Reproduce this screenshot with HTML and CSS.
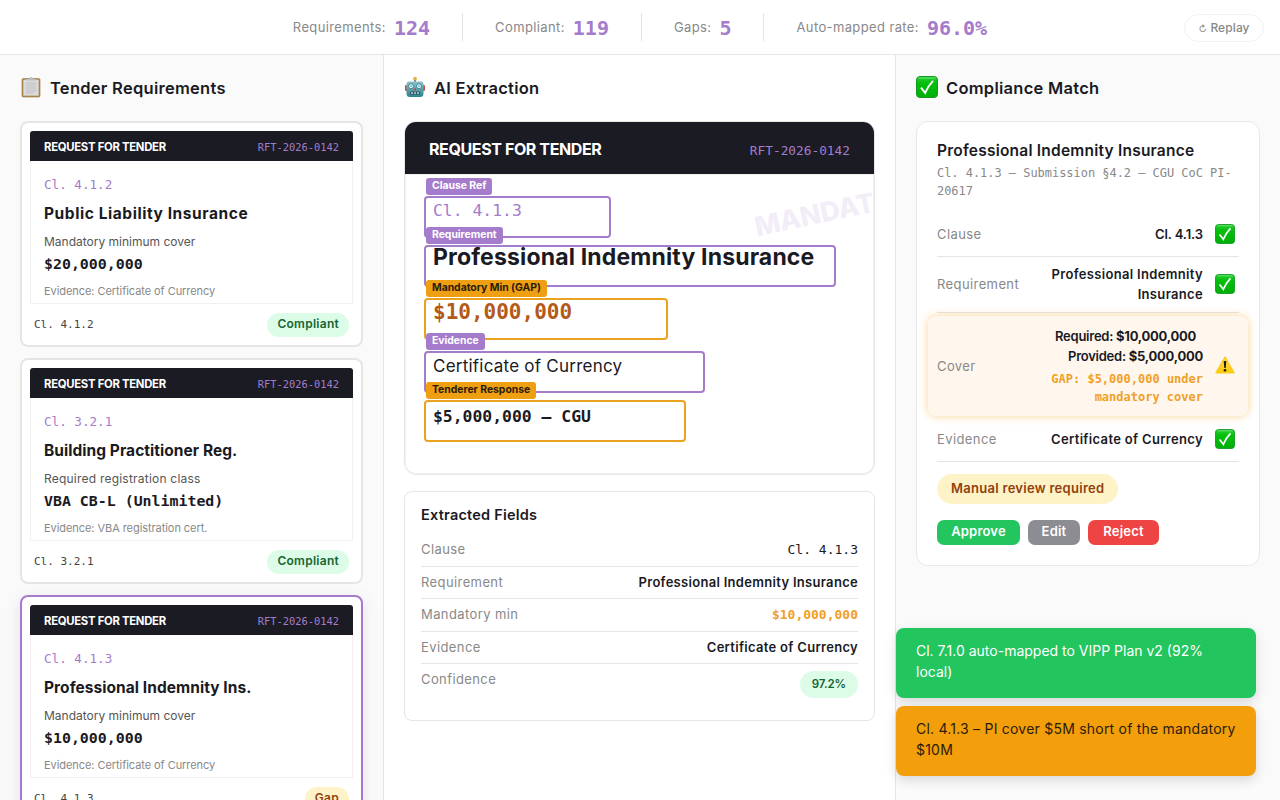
FILE: index.html
```html
<!DOCTYPE html>
<html lang="en">

<head>
    <meta charset="UTF-8">
    <meta name="viewport" content="width=device-width, initial-scale=1.0">
    <title>Tender Compliance</title>
    <link rel="stylesheet" href="styles.css">
</head>

<body>
    <!-- shared icons -->
    <svg class="defs" width="0" height="0">
        <defs>
            <linearGradient id="green" x1="0" y1="0" x2="0" y2="1">
                <stop offset="0" stop-color="#2fcf3c" />
                <stop offset=".3" stop-color="#06c00c" />
                <stop offset="1" stop-color="#00ad08" />
            </linearGradient>
            <linearGradient id="yellow" x1="0" y1="0" x2="0" y2="1">
                <stop offset="0" stop-color="#ffe45c" />
                <stop offset="1" stop-color="#fcc708" />
            </linearGradient>
            <linearGradient id="teal" x1="0" y1="0" x2="0" y2="1">
                <stop offset="0" stop-color="#8fc3c8" />
                <stop offset="1" stop-color="#2b8290" />
            </linearGradient>
        </defs>
        <symbol id="check" viewBox="0 0 22 22">
            <rect x=".5" y=".5" width="21" height="21" rx="3.5" fill="url(#green)" stroke="#119a20" />
            <path d="M2.5 2h17" stroke="#7be584" stroke-width=".8" />
            <path d="M5 11.6L9.2 16.8Q12 10 17 4.8" fill="none" stroke="#fff" stroke-width="1.9" />
        </symbol>
        <symbol id="warn" viewBox="0 0 20 18">
            <path d="M10 1.2L19 16.8H1z" fill="url(#yellow)" stroke="#fbcb18" stroke-width="1.4" stroke-linejoin="round" />
            <path d="M8.7 5h2.6l-.6 7H9.3z" fill="#1c1a12" />
            <circle cx="10" cy="14.3" r="1.3" fill="#1c1a12" />
        </symbol>
        <symbol id="clipboard" viewBox="0 0 20 22">
            <rect x="1" y="2.6" width="18" height="18.4" rx="1.2" fill="#b68d53" stroke="#8f6b3b" stroke-width=".6" />
            <rect x="2.4" y="3.8" width="15.2" height="15.8" fill="#dcdcde" />
            <path d="M4.5 7h11M4.5 9h11M4.5 11h11M4.5 13h11M4.5 15h11M4.5 17h8" stroke="#bcbcc2" stroke-width=".9" />
            <path d="M5 4.6V3h3Q8.5.9 10 .9T12 3h3v1.6z" fill="#b9bec4" />
        </symbol>
        <symbol id="robot" viewBox="0 0 20 22">
            <circle cx="10" cy="2.8" r="2" fill="#e8b04c" />
            <rect x="9" y="4" width="2" height="2" fill="#7d8d91" />
            <rect x="0" y="9" width="3" height="6" rx="1.2" fill="#c24b4b" />
            <rect x="17" y="9" width="3" height="6" rx="1.2" fill="#c24b4b" />
            <path d="M4 5.5h12q2.5 0 2.5 3v9q0 3.5-3.5 3.5H5q-3.5 0-3.5-3.5v-9q0-3 2.5-3z" fill="url(#teal)" />
            <circle cx="6" cy="10.2" r="2.5" fill="#d8f6fb" stroke="#31727e" stroke-width=".8" />
            <circle cx="14" cy="10.2" r="2.5" fill="#d8f6fb" stroke="#31727e" stroke-width=".8" />
            <circle cx="6" cy="10.2" r=".9" fill="#4cb9d4" />
            <circle cx="14" cy="10.2" r=".9" fill="#4cb9d4" />
            <path d="M10 11.5l1.3 2.5H8.7z" fill="#c93c3c" />
            <rect x="5" y="15.5" width="10" height="3" rx=".8" fill="#2a535c" />
            <path d="M6.2 17h1.6M9.2 17h1.6M12.2 17h1.6" stroke="#e7f3f4" stroke-width="1.6" />
        </symbol>
    </svg>

    <header class="stats">
        <div class="stat">Requirements: <b>124</b></div>
        <div class="stat">Compliant: <b>119</b></div>
        <div class="stat">Gaps: <b>5</b></div>
        <div class="stat">Auto-mapped rate: <b>96.0%</b></div>
        <button class="replay"><span>↻</span> Replay</button>
    </header>

    <main class="columns">
        <section class="column side">
            <h2><svg><use href="#clipboard" /></svg>Tender Requirements</h2>
            <div class="card">
                <div class="thumb">
                    <div class="thumb-head"><b>REQUEST FOR TENDER</b><span>RFT-2026-0142</span></div>
                    <p class="clause">Cl. 4.1.2</p>
                    <h3 class="wide">Public Liability Insurance</h3>
                    <p class="label">Mandatory minimum cover</p>
                    <p class="value">$20,000,000</p>
                    <p class="evidence">Evidence: Certificate of Currency</p>
                </div>
                <div class="card-foot"><span class="ref">Cl. 4.1.2</span><span class="pill ok">Compliant</span></div>
            </div>
            <div class="card">
                <div class="thumb">
                    <div class="thumb-head"><b>REQUEST FOR TENDER</b><span>RFT-2026-0142</span></div>
                    <p class="clause">Cl. 3.2.1</p>
                    <h3>Building Practitioner Reg.</h3>
                    <p class="label loose">Required registration class</p>
                    <p class="value">VBA CB-L (Unlimited)</p>
                    <p class="evidence">Evidence: VBA registration cert.</p>
                </div>
                <div class="card-foot"><span class="ref">Cl. 3.2.1</span><span class="pill ok">Compliant</span></div>
            </div>
            <div class="card active">
                <div class="thumb">
                    <div class="thumb-head"><b>REQUEST FOR TENDER</b><span>RFT-2026-0142</span></div>
                    <p class="clause">Cl. 4.1.3</p>
                    <h3>Professional Indemnity Ins.</h3>
                    <p class="label">Mandatory minimum cover</p>
                    <p class="value">$10,000,000</p>
                    <p class="evidence">Evidence: Certificate of Currency</p>
                </div>
                <div class="card-foot"><span class="ref">Cl. 4.1.3</span><span class="pill gap">Gap</span></div>
            </div>
        </section>

        <section class="column middle">
            <h2><svg><use href="#robot" /></svg>AI Extraction</h2>
            <div class="doc">
                <div class="doc-head"><b>REQUEST FOR TENDER</b><span>RFT-2026-0142</span></div>
                <div class="stamp">MANDATORY</div>
                <div class="doc-body">
                    <div class="box box-clause"><span class="tag">Clause Ref</span>Cl. 4.1.3</div>
                    <div class="box box-title"><span class="tag">Requirement</span>Professional Indemnity Insurance</div>
                    <div class="box box-min warn"><span class="tag">Mandatory Min (GAP)</span>$10,000,000</div>
                    <div class="box box-evidence"><span class="tag">Evidence</span>Certificate of Currency</div>
                    <div class="box box-response warn"><span class="tag">Tenderer Response</span>$5,000,000 — CGU</div>
                </div>
            </div>
            <div class="fields">
                <h3>Extracted Fields</h3>
                <div class="field"><span>Clause</span><b class="mono">Cl. 4.1.3</b></div>
                <div class="field"><span>Requirement</span><b>Professional Indemnity Insurance</b></div>
                <div class="field"><span>Mandatory min</span><b class="mono amber">$10,000,000</b></div>
                <div class="field"><span>Evidence</span><b>Certificate of Currency</b></div>
                <div class="field"><span>Confidence</span><b class="pill ok score">97.2%</b></div>
            </div>
        </section>

        <section class="column side last">
            <h2><svg><use href="#check" /></svg>Compliance Match</h2>
            <div class="match">
                <h3>Professional Indemnity Insurance</h3>
                <p class="source">Cl. 4.1.3 — Submission §4.2 — CGU CoC PI-20617</p>
                <div class="row row-clause"><span>Clause</span><b>Cl. 4.1.3</b><svg><use href="#check" /></svg></div>
                <div class="row row-req"><span>Requirement</span><b>Professional Indemnity<br>Insurance</b><svg><use href="#check" /></svg></div>
                <div class="row row-gap"><span>Cover</span>
                    <b><i>Required: <strong>$10,000,000</strong></i>Provided: <strong>$5,000,000</strong>
                        <em>GAP: $5,000,000 under<br>mandatory cover</em></b>
                    <svg><use href="#warn" /></svg>
                </div>
                <div class="row row-evidence"><span>Evidence</span><b>Certificate of Currency</b><svg><use href="#check" /></svg></div>
                <span class="review">Manual review required</span>
                <div class="actions">
                    <button class="approve">Approve</button>
                    <button class="edit">Edit</button>
                    <button class="reject">Reject</button>
                </div>
            </div>
        </section>
    </main>

    <div class="toasts">
        <div class="toast success">Cl. 7.1.0 auto-mapped to VIPP Plan v2 (92%<br>local)</div>
        <div class="toast warning">Cl. 4.1.3 – PI cover $5M short of the mandatory<br>$10M</div>
    </div>
</body>

</html>
```
FILE: styles.css
```css
* {
    box-sizing: border-box;
}

body {
    margin: 0;
    height: 800px;
    overflow: hidden;
    display: flex;
    flex-direction: column;
    background: #fff;
    color: #1a1a23;
    font-family: Inter, sans-serif;
    font-size: 13px;
}

h2,
h3,
p {
    margin: 0;
    white-space: nowrap;
}

button {
    font-family: inherit;
    border: 0;
}

.defs {
    position: absolute;
}

/* Top stats bar */
.stats {
    position: relative;
    flex: none;
    height: 55px;
    padding-bottom: 1px;
    display: flex;
    justify-content: center;
    align-items: center;
    border-bottom: 1px solid #e5e5e5;
    color: #888;
}

.stat {
    height: 28px;
    padding: 0 32px;
    display: flex;
    align-items: center;
    gap: 8px;
    line-height: 24px;
    letter-spacing: .38px;
    white-space: nowrap;
}

.stat:not(:last-of-type) {
    padding-bottom: 0;
}

.stat+.stat {
    border-left: 1px solid #e5e5e5;
}

.stat b {
    padding-top: 2px;
    color: #a57bcb;
    font-family: "DejaVu Sans Mono", monospace;
    font-size: 20px;
    letter-spacing: 0;
}

.replay {
    position: absolute;
    right: 16px;
    top: 14px;
    width: 80px;
    height: 28px;
    border: 1px solid #f2f2f2;
    border-radius: 14px;
    background: #fff;
    color: #888;
    font-size: 12px;
    font-weight: 500;
    padding: 0 0 1px;
    letter-spacing: .1px;
}

.replay span {
    font-size: 9px;
}

/* Three columns */
.columns {
    flex: none;
    height: 745px;
    display: grid;
    grid-template-columns: 384px 512px 384px;
}

.column {
    padding: 20px;
    border-right: 1px solid #e5e5e5;
    overflow: hidden;
}

.side {
    background: #fafafa;
}

.last {
    border-right: 0;
}

h2 {
    height: 26px;
    margin-bottom: 20px;
    display: flex;
    align-items: center;
    font-size: 16.5px;
    font-weight: 600;
    letter-spacing: .27px;
}

h2 svg {
    flex: none;
    width: 22px;
    height: 22px;
    margin-right: 8px;
    margin-top: -2px;
}

/* Requirement cards */
.card {
    height: 226px;
    margin-bottom: 11px;
    padding: 8px;
    border: 2px solid #e5e5e5;
    border-radius: 8px;
    background: #fff;
}

.card.active {
    border-color: #a57bcb;
    box-shadow: 0 4px 16px rgba(165, 123, 203, .2);
}

.thumb {
    height: 173px;
    border: 1px solid #f0f0f0;
    border-top: 0;
    border-radius: 3px 3px 0 0;
}

.thumb-head {
    height: 30px;
    margin: 0 -1px;
    padding: 2px 14px 0;
    display: flex;
    justify-content: space-between;
    align-items: center;
    border-radius: 3px 3px 0 0;
    background: #1b1b24;
    color: #fff;
    font-size: 11.3px;
    letter-spacing: -.27px;
}

.thumb-head span,
.doc-head span {
    color: #a57bcb;
    font-family: "DejaVu Sans Mono", monospace;
    font-size: 10.4px;
    letter-spacing: 0;
}

.thumb p,
.thumb h3 {
    padding-left: 13px;
}

.thumb .clause {
    margin-top: 15px;
    line-height: 18px;
    color: #a57bcb;
    font-family: "DejaVu Sans Mono", monospace;
    font-size: 12.6px;
}

.thumb h3 {
    margin-top: 8px;
    line-height: 24px;
    font-size: 15.5px;
    font-weight: 700;
    letter-spacing: .05px;
}

.thumb h3.wide {
    letter-spacing: .57px;
}

.thumb .label {
    margin-top: 7px;
    line-height: 18px;
    color: #555;
    font-size: 12px;
}

.thumb .loose {
    letter-spacing: .22px;
}

.thumb .value {
    margin-top: 2px;
    line-height: 22px;
    font-family: "DejaVu Sans Mono", monospace;
    font-size: 14.9px;
    font-weight: 700;
}

.thumb .evidence {
    margin-top: 7px;
    line-height: 18px;
    color: #888;
    font-size: 11px;
    letter-spacing: -.06px;
}

.card-foot {
    height: 41px;
    padding: 0 4px;
    display: flex;
    justify-content: space-between;
    align-items: center;
}

.ref {
    font-family: "DejaVu Sans Mono", monospace;
    font-size: 11px;
    color: #444;
}

.pill {
    height: 24px;
    padding: 0 10px;
    border-radius: 12px;
    line-height: 21px;
    font-size: 12px;
    font-weight: 600;
    letter-spacing: .27px;
}

.ok {
    background: #dcfce7;
    color: #166534;
}

.gap {
    background: #fef3c7;
    color: #92400e;
}

/* Source document */
.doc {
    position: relative;
    height: 354px;
    overflow: hidden;
    border: 1px solid #e5e5e5;
    border-radius: 12px;
}

.doc-head {
    height: 52px;
    padding: 2px 24px 0;
    display: flex;
    justify-content: space-between;
    align-items: center;
    background: #1b1b24;
    color: #fff;
    font-size: 16px;
    letter-spacing: -.39px;
}

.doc-head span {
    padding-top: 2px;
    font-size: 12.8px;
}

.stamp {
    position: absolute;
    left: 348px;
    top: 70px;
    transform: rotate(-12deg);
    color: #a57bcb;
    opacity: .13;
    font-size: 27px;
    font-weight: 800;
}

.doc-body {
    position: relative;
    height: 300px;
    padding: 22px 0 0 19px;
    border-radius: 0 0 11px 11px;
    box-shadow: inset 0 0 0 1px #f0f0f0;
}

.box {
    position: relative;
    height: 42px;
    padding-left: 7px;
    border: 2px solid #a57bcb;
    border-radius: 4px;
    line-height: 26px;
    white-space: nowrap;
}

.tag {
    position: absolute;
    left: 0;
    top: -20px;
    height: 17px;
    padding: 0 6px;
    border-radius: 3px;
    background: #a57bcb;
    color: #fff;
    font: 700 10.4px/16px Inter, sans-serif;
    letter-spacing: -.02px;
}

.warn {
    border-color: #eba220;
}

.warn .tag {
    background: #ef9f12;
    color: #2b1c0a;
}

.box-clause {
    width: 187px;
    color: #a57bcb;
    font-family: "DejaVu Sans Mono", monospace;
    font-size: 16.4px;
}

.box-title {
    width: 412px;
    margin-top: 7px;
    line-height: 21px;
    font-size: 23px;
    font-weight: 700;
    letter-spacing: .16px;
}

.box-min {
    width: 244px;
    margin-top: 11px;
    line-height: 24px;
    color: #b45a18;
    font-family: "DejaVu Sans Mono", monospace;
    font-size: 21px;
    font-weight: 700;
}

.box-evidence {
    width: 281px;
    margin-top: 11px;
    font-size: 17px;
    letter-spacing: .23px;
}

.box-response {
    width: 262px;
    margin-top: 7px;
    line-height: 29px;
    font-family: "DejaVu Sans Mono", monospace;
    font-size: 16.4px;
    font-weight: 700;
}

/* Extracted fields */
.fields {
    height: 230px;
    margin-top: 16px;
    padding: 13px 16px;
    border: 1px solid #e5e5e5;
    border-radius: 8px;
}

.fields h3 {
    margin-bottom: 9px;
    line-height: 20px;
    font-size: 14.5px;
    font-weight: 600;
    letter-spacing: .22px;
}

.field {
    height: 32.5px;
    display: flex;
    justify-content: space-between;
    border-bottom: 1px solid #e5e5e5;
    line-height: 31px;
    letter-spacing: .4px;
}

.field:last-child {
    border: 0;
}

.field span {
    color: #888;
}

.field b {
    font-weight: 600;
    letter-spacing: .3px;
}

.field .mono {
    line-height: 32px;
    font-family: "DejaVu Sans Mono", monospace;
    font-weight: 400;
    letter-spacing: 0;
}

.field .amber {
    color: #f0a028;
    font-weight: 700;
}

.field .score {
    height: 27px;
    margin-top: 7px;
    padding: 0 12px;
    border-radius: 14px;
    line-height: 26px;
    font-size: 11.5px;
    letter-spacing: -.1px;
}

/* Compliance match */
.match {
    width: 344px;
    height: 445px;
    padding: 18px 20px;
    border: 1px solid #e8e8e8;
    border-radius: 12px;
    background: #fff;
}

.match h3 {
    line-height: 22px;
    margin-bottom: 2px;
    font-size: 15.5px;
    font-weight: 600;
    letter-spacing: .22px;
}

.source {
    line-height: 18px;
    color: #888;
    font-family: "DejaVu Sans Mono", monospace;
    font-size: 11.95px;
    white-space: normal;
}

.row {
    display: grid;
    grid-template-columns: 90px 1fr 20px;
    column-gap: 12px;
    align-items: center;
    padding-right: 4px;
    border-bottom: 1px solid #e5e5e5;
    color: #888;
    letter-spacing: .4px;
}

.row b {
    color: #1a1a23;
    font-weight: 600;
    line-height: 20px;
    letter-spacing: .33px;
    text-align: right;
    white-space: nowrap;
}

.row svg {
    width: 20px;
    height: 20px;
}

.row-clause {
    height: 45px;
    margin-top: 12px;
}

.row-clause b {
    letter-spacing: -.1px;
}

.row-req {
    height: 56px;
    padding-bottom: 2px;
}

.row-gap {
    height: 100px;
    margin: 3px -9px 0;
    padding: 0 13px 0 9px;
    border: 0;
    border-radius: 8px;
    background: #fff7ed;
    box-shadow: 0 0 9px rgba(245, 158, 11, .45);
}

.row-gap b {
    letter-spacing: -.25px;
}

.row-gap i {
    display: block;
    padding-right: 7px;
    font-style: normal;
}

.row-gap strong {
    font-weight: 700;
}

.row-gap em {
    display: block;
    margin-top: 4px;
    color: #f0a028;
    font: 700 12px/18px "DejaVu Sans Mono", monospace;
    letter-spacing: 0;
}

.row-gap svg {
    margin-top: -2px;
}

.row-evidence {
    height: 46px;
}

.review {
    display: inline-block;
    height: 30px;
    margin-top: 12px;
    padding: 0 14px;
    border-radius: 15px;
    background: #fef3c7;
    color: #92400e;
    font-weight: 600;
    line-height: 28px;
    letter-spacing: .28px;
}

.actions {
    margin-top: 16px;
    display: flex;
    gap: 8px;
}

.actions button {
    height: 25px;
    padding: 0 0 3px;
    border-radius: 7px;
    color: #fff;
    font-size: 13px;
    font-weight: 600;
    letter-spacing: .2px;
}

.actions .approve {
    width: 83px;
    background: #22c55e;
}

.actions .edit {
    width: 52px;
    background: #8c8c93;
}

.actions .reject {
    width: 71px;
    background: #ef4444;
}

/* Notifications */
.toasts {
    position: absolute;
    right: 24px;
    bottom: 24px;
    width: 360px;
    display: grid;
    gap: 8px;
}

.toast {
    height: 70px;
    padding: 12px 20px;
    border-radius: 8px;
    font-size: 14px;
    line-height: 21px;
    white-space: nowrap;
    box-shadow: 0 4px 12px rgba(0, 0, 0, .14);
}

.success {
    background: #22c55e;
    color: #fff;
}

.warning {
    background: #f39e0b;
    color: #2b1c0a;
    letter-spacing: .22px;
}
```
